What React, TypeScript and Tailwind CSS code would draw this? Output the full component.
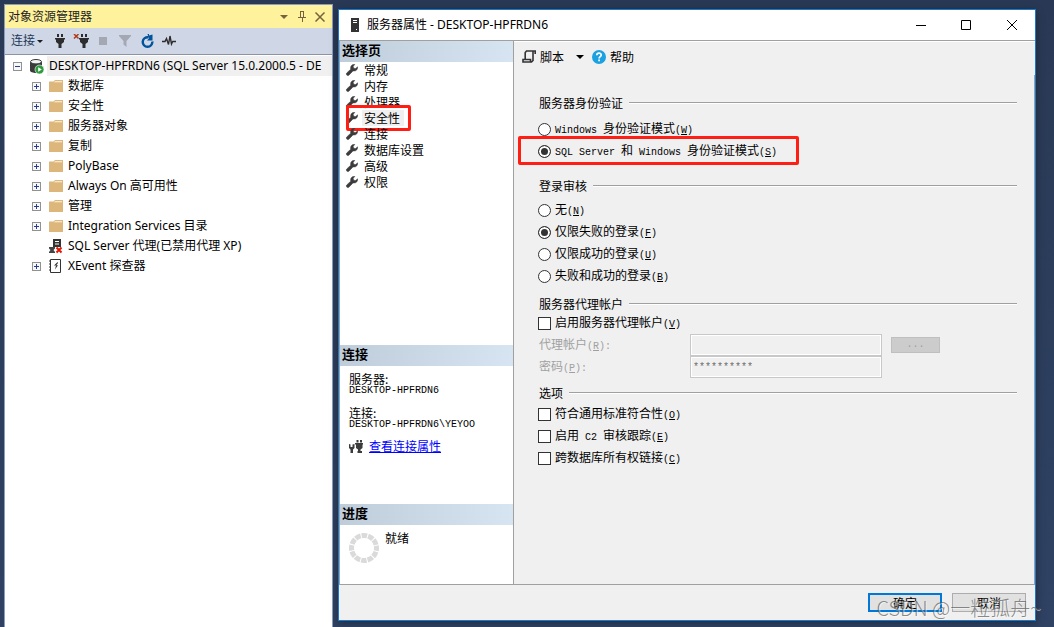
import type { ReactNode } from "react";

const UI_FONT = "font-['Noto_Sans','Noto_Sans_CJK_SC',sans-serif]";
const DIALOG_FONT = "font-['Noto_Sans_CJK_SC',sans-serif]";

const treeItems = [
  { label: "数据库", icon: "folder" },
  { label: "安全性", icon: "folder" },
  { label: "服务器对象", icon: "folder" },
  { label: "复制", icon: "folder" },
  { label: "PolyBase", icon: "folder" },
  { label: "Always On 高可用性", icon: "folder" },
  { label: "管理", icon: "folder" },
  { label: "Integration Services 目录", icon: "folder" },
  { label: "SQL Server 代理(已禁用代理 XP)", icon: "agent" },
  { label: "XEvent 探查器", icon: "xevent" },
];

const pages = [
  "常规",
  "内存",
  "处理器",
  "安全性",
  "连接",
  "数据库设置",
  "高级",
  "权限",
];

function PlugShape() {
  return (
    <>
      <path d="M2 0h2v3H2zM6 0h2v3H6z" />
      <path d="M0 4h10v1.500H9V8L6.500 10v4h-3v-4L1 8V5.500H0z" />
    </>
  );
}

function PlugIcon() {
  return (
    <svg width="10" height="14" viewBox="0 0 10 14" fill="#2d2d30">
      <PlugShape />
    </svg>
  );
}

function UnplugIcon() {
  return (
    <svg width="16" height="14" viewBox="0 0 16 14" fill="#2d2d30">
      <g transform="translate(6 0)">
        <PlugShape />
      </g>
      <path d="M1 0l4.500 4.500M5.500 0L1 4.500" stroke="#b03a1e" strokeWidth="1.500" />
    </svg>
  );
}

function FunnelIcon() {
  return (
    <svg width="12" height="12" viewBox="0 0 12 12" fill="#a3a8b3">
      <path d="M0 0h12v1L7.500 6v6L4.500 9.500V6L0 1z" />
    </svg>
  );
}

function RefreshIcon() {
  return (
    <svg width="13" height="14" viewBox="0 0 13 14" fill="none">
      <path d="M11.300 7.500A4.800 4.800 0 1 1 7.500 3.300" stroke="#00539c" strokeWidth="2.400" />
      <path d="M6.500 0L8 0v1.500L11.500.500v6H6l1.800-2z" fill="#00539c" />
    </svg>
  );
}

function ActivityIcon() {
  return (
    <svg width="14" height="12" viewBox="0 0 14 12" fill="none" stroke="#2d2d30">
      <path d="M0 6.500h3L4.500 3.500l2 6L8 1l1.500 8 1.200-2.500H14" strokeWidth="1.400" />
    </svg>
  );
}

function ServerDbIcon() {
  return (
    <svg width="14" height="15" viewBox="0 0 14 15">
      <path d="M0 3v8.500C0 13 3 14 6 14h1V4z" fill="#3a3a3a" />
      <path d="M0 3h12v6H0z" fill="#3a3a3a" />
      <ellipse cx="6" cy="2.700" rx="5.500" ry="2.200" fill="#f2f2f2" stroke="#3a3a3a" />
      <circle cx="9.500" cy="10.500" r="4.500" fill="#2f9a3e" stroke="#fff" strokeWidth="0.600" />
      <path d="M8.200 8.200v4.600l3.600-2.300z" fill="#fff" />
    </svg>
  );
}

function FolderIcon() {
  return (
    <svg width="14" height="12" viewBox="0 0 14 12">
      <path d="M0 12V1.500h4.500L6 0h8v12z" fill="#dcb67a" />
      <path d="M6 1.200h7v1H5z" fill="#fff6e4" />
    </svg>
  );
}

function AgentIcon() {
  return (
    <svg width="14" height="15" viewBox="0 0 14 15">
      <path d="M4 0h8v8H4z" fill="#333" />
      <path d="M6 2h4v1H6zM6 4.500h4v1H6z" fill="#fff" />
      <path d="M0 8h6v1.500L4.500 11 6 13v1H0v-1l1.500-2L0 9.500z" fill="#444" />
      <path d="M7.500 8.500l5 5M12.500 8.500l-5 5" stroke="#e51400" strokeWidth="2" />
    </svg>
  );
}

function XEventIcon() {
  return (
    <svg width="13" height="14" viewBox="0 0 13 14">
      <path d="M1.500.500h10v13h-10z" fill="#fff" stroke="#333" />
      <path d="M0 2h2M0 5h2M0 8h2M0 11h2" stroke="#333" />
      <path d="M8.500 3L5 6.500h2L6 10.500 9 6.200H7.200L9 4z" fill="#333" />
    </svg>
  );
}

function Expander({ open = false }: { open?: boolean }) {
  return (
    <svg width="9" height="9" viewBox="0 0 9 9" shapeRendering="crispEdges">
      <path d="M.500.500h8v8h-8z" fill="#f7f7f7" stroke="#919191" />
      <path d="M2 4.500h5" stroke="#27408b" />
      {!open && <path d="M4.500 2v5" stroke="#27408b" />}
    </svg>
  );
}

function WrenchIcon() {
  return (
    <svg width="12" height="12" viewBox="0 0 12 12" fill="#3c3c3c" stroke="#3c3c3c" strokeWidth="0.500">
      <path d="M8.800.300L7.200 2.400l.500 1.800 1.900.300 2-1.700c.300 2.500-1.300 4.300-3.700 4.200L7 6.900 2.900 11.200c-1.400 1.200-3.400-.600-2.200-2.200L4.700 5.200C4 2.400 6 .100 8.800.300z" />
    </svg>
  );
}

function ServerIcon() {
  return (
    <svg width="8" height="14" viewBox="0 0 8 14" shapeRendering="crispEdges">
      <path d="M0 0h8v14H0z" fill="#333" />
      <path d="M2 2h4v1H2zM2 4h4v1H2zM5 11h1v1H5z" fill="#fff" />
    </svg>
  );
}

function ScriptIcon() {
  return (
    <svg width="14" height="13" viewBox="0 0 14 13" fill="none" stroke="#333">
      <path d="M13.200 4V1H4.500L3.200 2.500v6.700" strokeWidth="1.600" />
      <path d="M11 1v9.500L9.500 12H1V9.500h7.500V12" strokeWidth="1.600" />
    </svg>
  );
}

function HelpIcon() {
  return (
    <svg width="14" height="14" viewBox="0 0 14 14">
      <circle cx="7" cy="7" r="7" fill="#1ba1e2" />
      <path d="M4.800 5.300c0-3 4.500-2.800 4.400-.300C9.200 6.600 7.100 6.600 7.100 8.400" fill="none" stroke="#fff" strokeWidth="1.700" />
      <path d="M6.200 9.500h1.800v1.700H6.200z" fill="#fff" />
    </svg>
  );
}

function ConnectionIcon() {
  return (
    <svg width="14" height="13" viewBox="0 0 14 13" fill="#3c3c3c">
      <path d="M0 4l1.500.500v2.500h2V4.500L5.500 4v4L4 9.500V13H1.500V9.500L0 8z" />
      <path d="M7.500 0h2v2.500h-2zM11 0h2v2.500h-2zM6 3h8v1.500h-.500V8l-2 1.500V11H13v2H8.500v-2H9V9.500L7 8V4.500H6z" />
    </svg>
  );
}

function SpinnerIcon() {
  return (
    <svg width="30" height="30" viewBox="0 0 30 30" fill="none">
      <circle cx="15" cy="15" r="12.500" stroke="#dadada" strokeWidth="5" strokeDasharray="5.545 1" strokeDashoffset="2.770" />
    </svg>
  );
}

function Caret({ className = "" }: { className?: string }) {
  return (
    <svg width="8" height="4" viewBox="0 0 8 4" className={className}>
      <path d="M0 0h8L4 4z" fill="currentColor" />
    </svg>
  );
}

// Latin runs are set in a half-width mono face beside the full-width glyphs.
function Mixed({ text }: { text: string }) {
  const parts = text.split(/([\x20-\x7e]+)/).filter(Boolean);
  return (
    <>
      {parts.map((part, index) =>
        /^[\x20-\x7e]/.test(part) ? (
          <span key={index} className="font-['Liberation_Mono',monospace] text-[10px]">
            {part}
          </span>
        ) : (
          part
        ),
      )}
    </>
  );
}

function Caption({ text, accessKey, suffix = "" }: { text: string; accessKey: string; suffix?: string }) {
  return (
    <span className="whitespace-pre">
      <Mixed text={text} />
      <span className="font-['Liberation_Mono',monospace] text-[10px]">
        (<u>{accessKey}</u>){suffix}
      </span>
    </span>
  );
}

function Group({ title, className, children }: { title: string; className?: string; children: ReactNode }) {
  return (
    <fieldset className={className}>
      <legend className="flex h-4 w-full items-center gap-1.5 leading-4">
        {title}
        <span className="h-0.5 flex-1 border-t border-[#a0a0a0] bg-white" />
      </legend>
      {children}
    </fieldset>
  );
}

function Radio({ name, text, accessKey, checked = false }: { name: string; text: string; accessKey: string; checked?: boolean }) {
  return (
    <label className="flex h-[22px] w-fit items-center gap-1">
      <input
        type="radio"
        name={name}
        defaultChecked={checked}
        className="-ml-px size-[13px] appearance-none rounded-full border border-[#333] bg-white checked:bg-[#333] checked:shadow-[inset_0_0_0_2px_white]"
      />
      <Caption text={text} accessKey={accessKey} />
    </label>
  );
}

function Check({ text, accessKey }: { text: string; accessKey: string }) {
  return (
    <label className="flex h-[22px] w-fit items-center gap-1">
      <input
        type="checkbox"
        className="-ml-px size-[13px] appearance-none border border-[#333] bg-white checked:bg-[#333]"
      />
      <Caption text={text} accessKey={accessKey} />
    </label>
  );
}

function SideHeader({ title }: { title: string }) {
  return (
    <h2 className="h-[21px] bg-linear-to-r from-[#bfcddb] to-[#d7e4f2] pl-0.5 text-[13px] leading-[18px] font-bold">
      {title}
    </h2>
  );
}

function ObjectExplorer() {
  return (
    <aside className={`mt-1 ml-1 flex w-[329px] shrink-0 flex-col border border-b-0 border-[#8e9bbc] bg-white ${UI_FONT}`}>
      <header className="flex h-[23px] shrink-0 items-center bg-[#fff29d] pl-[3px] text-[#1e1e1e]">
        <h1 className="flex-1">对象资源管理器</h1>
        <div className="flex items-center gap-1.5 pr-1.5 text-[#75633d]">
          <button type="button" aria-label="窗口位置" className="flex w-3 justify-center">
            <Caret />
          </button>
          <button type="button" aria-label="自动隐藏" className="flex w-3 justify-center">
            <svg width="8" height="11" viewBox="0 0 8 11" fill="none" stroke="currentColor" shapeRendering="crispEdges">
              <path d="M2.500 7V.500h3V7M0 6.500h8M4 7v4M5.500.500V7" />
            </svg>
          </button>
          <button type="button" aria-label="关闭" className="flex w-3 justify-center">
            <svg width="10" height="10" viewBox="0 0 10 10" stroke="currentColor" strokeWidth="1.500">
              <path d="M.500.500l9 9M9.500.500l-9 9" />
            </svg>
          </button>
        </div>
      </header>
      <div className="flex h-[27px] shrink-0 items-center border-b border-[#8c93a5] bg-[#cfd6e5] pl-1.5">
        <button type="button" className="flex items-center gap-0.5 text-[#1e395b]">
          连接
          <svg width="6" height="3" viewBox="0 0 6 3">
            <path d="M0 0h6L3 3z" fill="#1e1e1e" />
          </svg>
        </button>
        <button type="button" aria-label="连接对象资源管理器" className="ml-3">
          <PlugIcon />
        </button>
        <button type="button" aria-label="断开连接" className="ml-2">
          <UnplugIcon />
        </button>
        <button type="button" aria-label="停止" className="ml-2.5 size-2 bg-[#a3a8b3]" />
        <button type="button" aria-label="筛选" className="ml-3">
          <FunnelIcon />
        </button>
        <button type="button" aria-label="刷新" className="ml-2.5">
          <RefreshIcon />
        </button>
        <button type="button" aria-label="活动监视器" className="ml-2">
          <ActivityIcon />
        </button>
      </div>
      <ul className="overflow-hidden pt-px whitespace-nowrap text-black">
        <li>
          <div className="flex h-5 items-center">
            <span className="ml-2">
              <Expander open />
            </span>
            <span className="ml-2">
              <ServerDbIcon />
            </span>
            <span className="ml-[3px] flex-1 overflow-hidden bg-[#f0f0f0] pl-0.5 leading-5">
              DESKTOP-HPFRDN6 (SQL Server 15.0.2000.5 - DE
            </span>
          </div>
          <ul className="pl-[27px]">
            {treeItems.map((item) => (
              <li key={item.label} className="flex h-5 items-center">
                <span className="w-[17px]">{item.icon !== "agent" && <Expander />}</span>
                <span className="w-[19px]">
                  {item.icon === "folder" && <FolderIcon />}
                  {item.icon === "agent" && <AgentIcon />}
                  {item.icon === "xevent" && <XEventIcon />}
                </span>
                {item.label}
              </li>
            ))}
          </ul>
        </li>
      </ul>
    </aside>
  );
}

function PageList() {
  return (
    <nav className="flex-1 pl-1.5">
      {pages.map((page) => (
        <div key={page} className="relative flex h-4 items-center gap-1">
          <WrenchIcon />
          <a href="#page" className={page === "安全性" ? "bg-[#f0f0f0] px-0.5 pr-1 leading-4" : "px-0.5 leading-4"}>
            {page}
          </a>
          {page === "安全性" && (
            <span className="absolute -top-[5px] left-0 h-[26px] w-[65px] rounded-xs border-3 border-[#ff1e14]" />
          )}
        </div>
      ))}
    </nav>
  );
}

function Sidebar() {
  return (
    <div className="flex w-[175px] shrink-0 flex-col border-x border-[#a0a0a0] bg-white">
      <SideHeader title="选择页" />
      <PageList />
      <section className="h-[159px]">
        <SideHeader title="连接" />
        <div className="px-[9px] pt-[7px]">
          <dl>
            <dt className="h-3 leading-3">服务器:</dt>
            <dd className="h-3 font-['Liberation_Mono',monospace] text-[10px] leading-3">DESKTOP-HPFRDN6</dd>
            <dt className="mt-2.5 h-3 leading-3">连接:</dt>
            <dd className="h-3 font-['Liberation_Mono',monospace] text-[10px] leading-3">DESKTOP-HPFRDN6\YEYOO</dd>
          </dl>
          <div className="mt-[7px] flex items-center gap-1.5">
            <ConnectionIcon />
            <a href="#connection" className="leading-4 text-[#0000ff] underline">
              查看连接属性
            </a>
          </div>
        </div>
      </section>
      <section className="h-20">
        <SideHeader title="进度" />
        <div className="flex gap-1.5 px-[9px] pt-[5px]">
          <span className="pt-[3px]">
            <SpinnerIcon />
          </span>
          <span className="leading-4">就绪</span>
        </div>
      </section>
    </div>
  );
}

function SecurityPage() {
  return (
    <form className="flex-1 border-r border-[#a0a0a0] pt-5 pr-[17px] pl-[25px]">
      <Group title="服务器身份验证">
        <div className="pt-[7px]">
          <Radio name="auth" text="Windows 身份验证模式" accessKey="W" />
          <div className="relative w-fit">
            <Radio name="auth" text="SQL Server 和 Windows 身份验证模式" accessKey="S" checked />
            <span className="pointer-events-none absolute -top-1 -right-[22px] -bottom-[3px] -left-[21px] rounded-xs border-3 border-[#ff1e14]" />
          </div>
        </div>
      </Group>
      <Group title="登录审核" className="mt-4">
        <div className="pt-[5px]">
          <Radio name="audit" text="无" accessKey="N" />
          <Radio name="audit" text="仅限失败的登录" accessKey="F" checked />
          <Radio name="audit" text="仅限成功的登录" accessKey="U" />
          <Radio name="audit" text="失败和成功的登录" accessKey="B" />
        </div>
      </Group>
      <Group title="服务器代理帐户" className="mt-[9px]">
        <Check text="启用服务器代理帐户" accessKey="V" />
        <div className="flex h-[22px] items-center text-[#a0a0a0]">
          <label htmlFor="proxy" className="w-[151px]">
            <Caption text="代理帐户" accessKey="R" suffix=":" />
          </label>
          <input id="proxy" disabled className="h-[22px] w-48 border border-[#c8c8c8] bg-[#f0f0f0] px-0.5 inset-ring inset-ring-white" />
          <button type="button" disabled className="ml-[9px] h-4 w-[49px] border border-[#bfbfbf] bg-[#cccccc] font-['Liberation_Mono',monospace] text-[10px] leading-3">
            ...
          </button>
        </div>
        <div className="flex h-[22px] items-center text-[#a0a0a0]">
          <label htmlFor="password" className="w-[151px]">
            <Caption text="密码" accessKey="P" suffix=":" />
          </label>
          <input
            id="password"
            disabled
            defaultValue="**********"
            className="h-[22px] w-48 border border-[#c8c8c8] bg-[#f0f0f0] px-0.5 font-['Liberation_Mono',monospace] text-[10px] text-[#6d6d6d] inset-ring inset-ring-white"
          />
        </div>
      </Group>
      <Group title="选项" className="mt-[7px]">
        <div className="pt-0.5">
          <Check text="符合通用标准符合性" accessKey="O" />
          <Check text="启用 C2 审核跟踪" accessKey="E" />
          <Check text="跨数据库所有权链接" accessKey="C" />
        </div>
      </Group>
    </form>
  );
}

function PropertiesDialog() {
  return (
    <main className={`relative mt-[9px] mr-[18px] mb-1.5 ml-[5px] flex min-w-0 flex-1 flex-col border border-[#1979ca] bg-[#f0f0f0] text-black shadow-[0_2px_8px_rgba(0,0,0,0.35)] ${DIALOG_FONT}`}>
      <header className={`flex h-[30px] shrink-0 items-center bg-white pl-3 ${UI_FONT}`}>
        <ServerIcon />
        <h1 className="ml-2 flex-1">服务器属性 - DESKTOP-HPFRDN6</h1>
        <button type="button" aria-label="最小化" className="flex w-[45px] justify-center">
          <svg width="10" height="10" viewBox="0 0 10 10" stroke="#000">
            <path d="M0 5.500h10" />
          </svg>
        </button>
        <button type="button" aria-label="最大化" className="flex w-[46px] justify-center">
          <svg width="10" height="10" viewBox="0 0 10 10" stroke="#000" fill="none">
            <path d="M.500.500h9v9h-9z" />
          </svg>
        </button>
        <button type="button" aria-label="关闭" className="flex w-[46px] justify-center">
          <svg width="10" height="10" viewBox="0 0 10 10" stroke="#000">
            <path d="M0 0l10 10M10 0L0 10" />
          </svg>
        </button>
      </header>
      <div className="flex min-h-0 flex-1 border-y border-[#a0a0a0]">
        <Sidebar />
        <div className="flex flex-1 flex-col">
          <div className="flex h-[34px] shrink-0 items-center border-t border-white pb-1 pl-2">
            <button type="button" className="flex items-center gap-1">
              <ScriptIcon />
              脚本
              <Caret className="ml-2" />
            </button>
            <button type="button" className="ml-2 flex items-center gap-1">
              <HelpIcon />
              帮助
            </button>
          </div>
          <SecurityPage />
        </div>
      </div>
      <footer className="flex h-[35px] shrink-0 items-center justify-end gap-2.5 pr-[9px]">
        <button type="button" className="h-[19px] w-[74px] border-2 border-[#0078d7] bg-[#e1e1e1] leading-4">
          确定
        </button>
        <button type="button" className="h-[19px] w-[74px] border border-[#adadad] bg-[#e1e1e1] leading-4">
          取消
        </button>
      </footer>
      <span className="pointer-events-none absolute -right-1.5 bottom-0 text-xl leading-6 font-light whitespace-nowrap text-[#5a5a5a]/70 text-shadow-[1px_1px_0_rgba(255,255,255,0.5)]">
        CSDN @一粒孤舟~
      </span>
    </main>
  );
}

export default function App() {
  return (
    <div className="flex min-h-screen bg-linear-to-b from-[#293955] to-[#2f4263] text-xs">
      <ObjectExplorer />
      <PropertiesDialog />
    </div>
  );
}
